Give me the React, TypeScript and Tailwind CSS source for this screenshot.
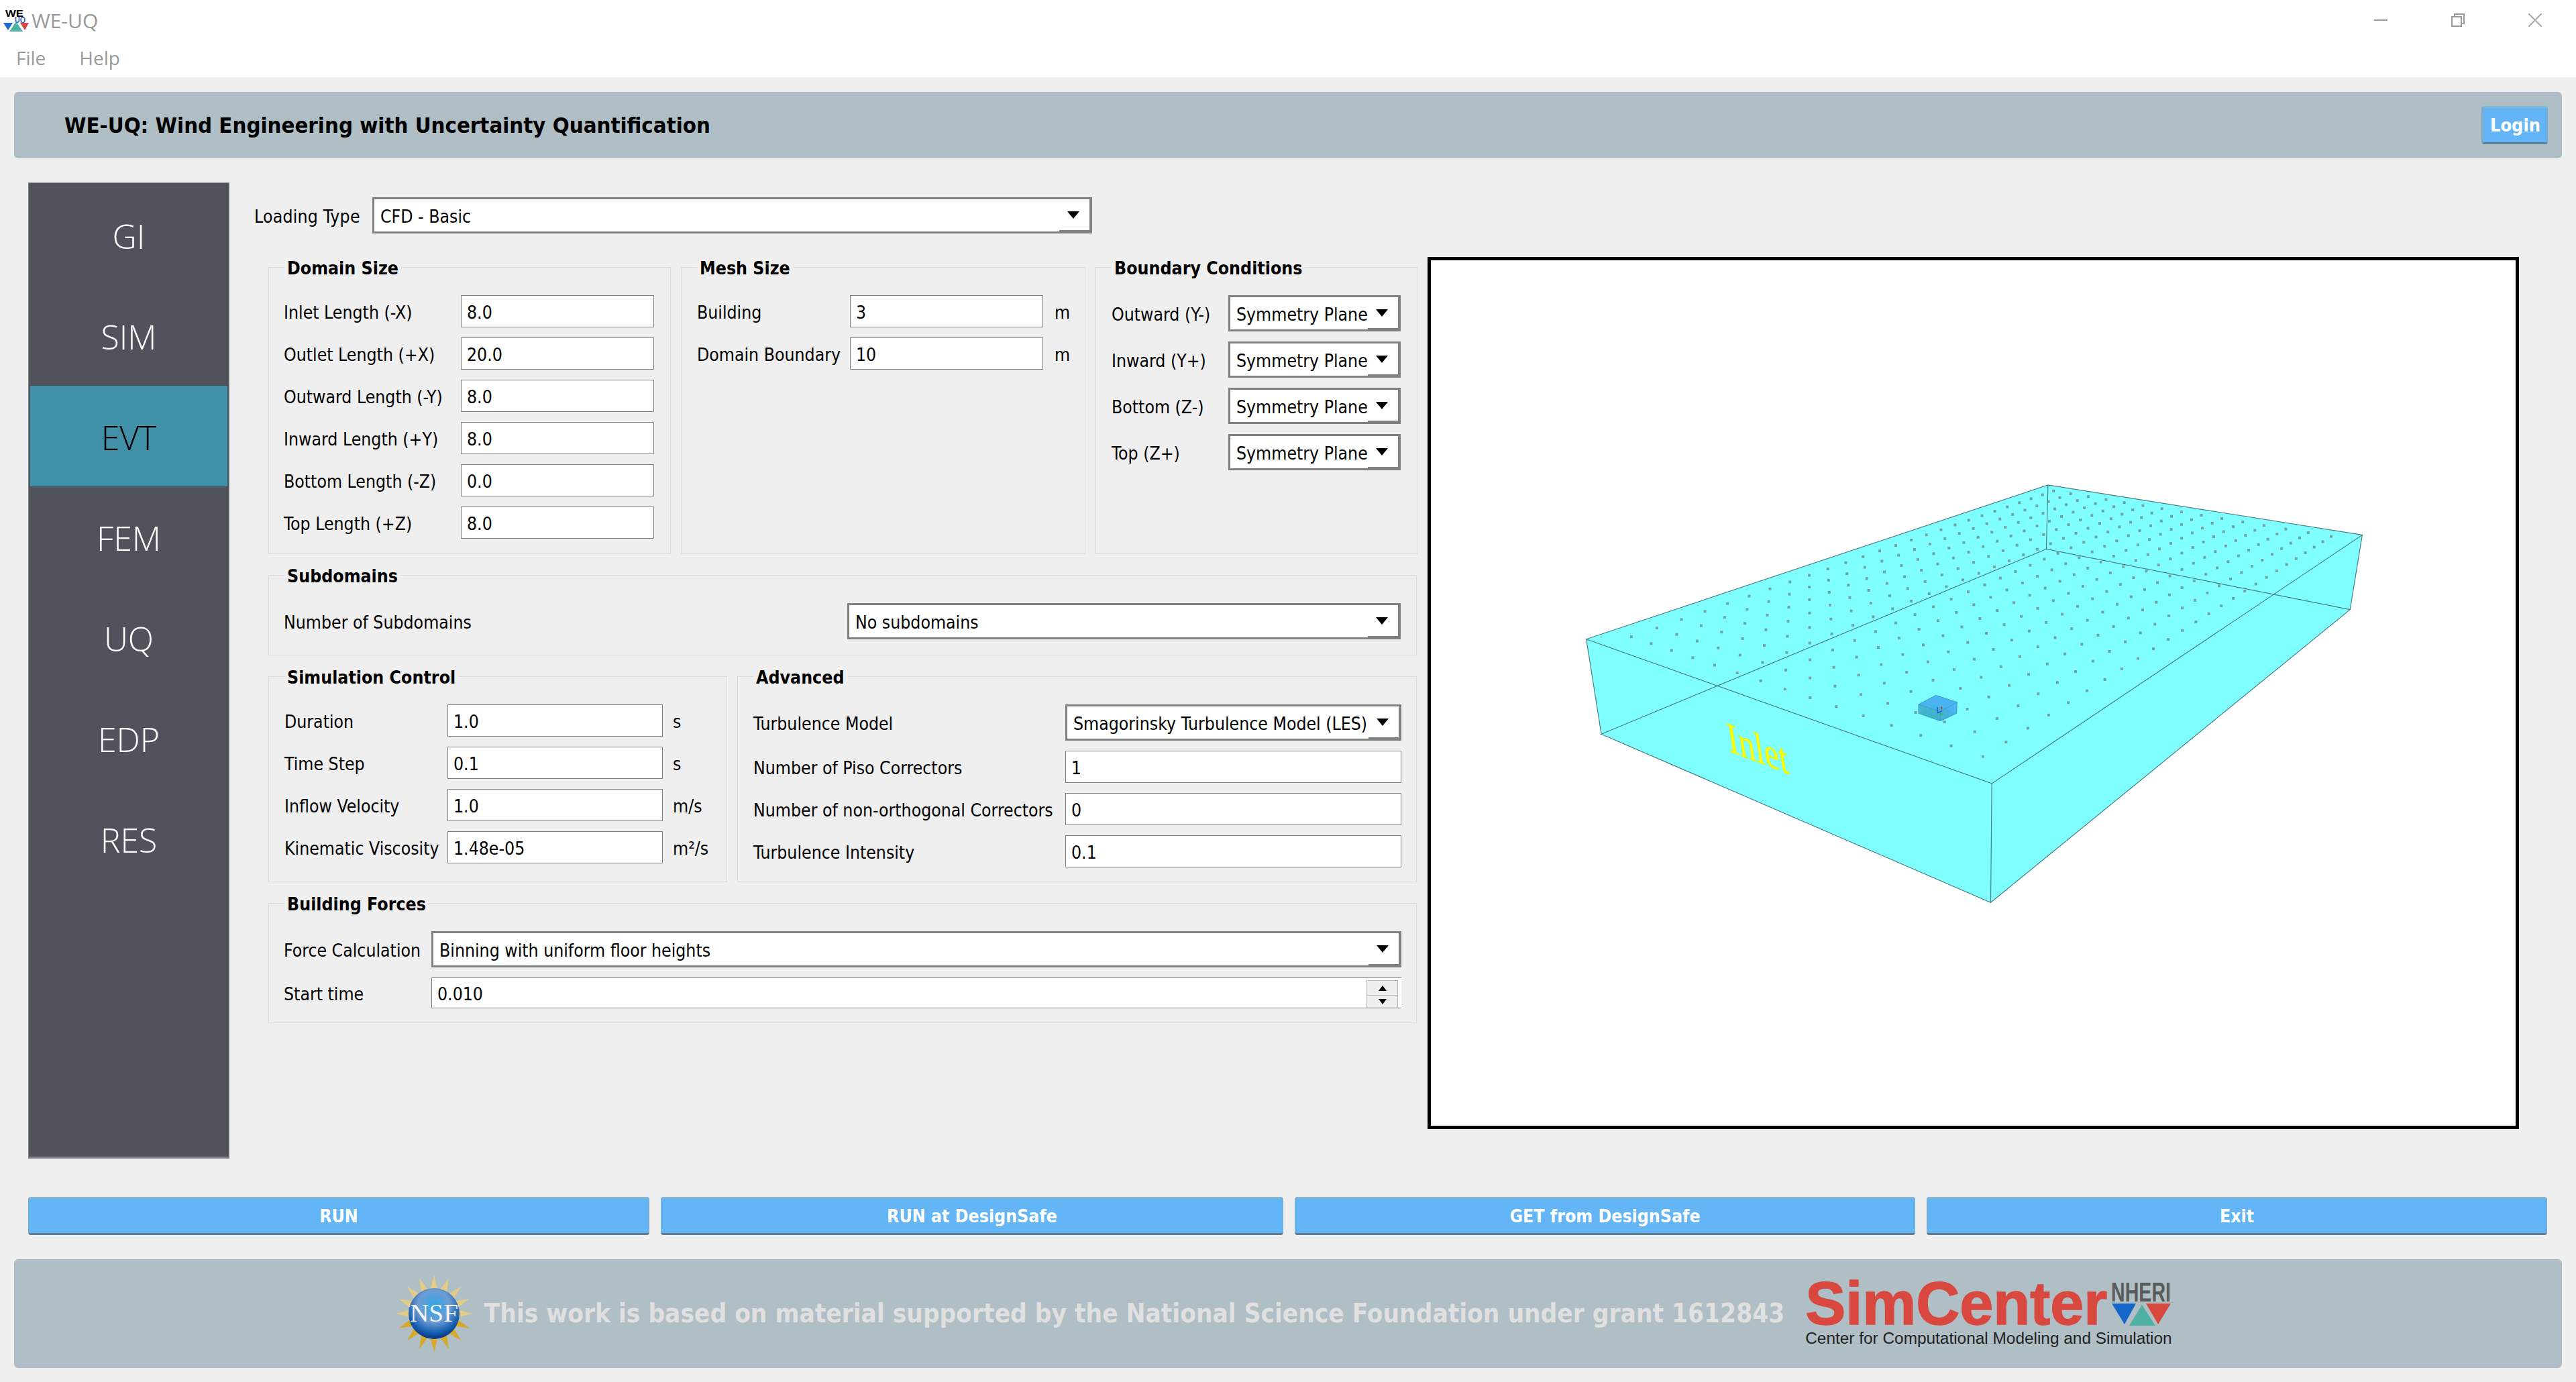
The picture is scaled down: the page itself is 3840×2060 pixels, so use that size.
import React from "react";

const F = "font-['DejaVu_Sans_Condensed','DejaVu_Sans',sans-serif]";

function project(u: number, v: number) {
  // homography from the unit square to the four corner dots of the grid (real pixels inside the frame)
  const conv = (x: number, y: number) => [2300 + x / 1.206 - 2133, 680 + y / 2.24 - 388];
  const [x0, y0] = conv(159, 603);
  const [x1, y1] = conv(791, 1003);
  const [x2, y2] = conv(1417, 268);
  const [x3, y3] = conv(918, 116);
  const dx1 = x1 - x2, dx2 = x3 - x2, sx = x0 - x1 + x2 - x3;
  const dy1 = y1 - y2, dy2 = y3 - y2, sy = y0 - y1 + y2 - y3;
  const det = dx1 * dy2 - dx2 * dy1;
  const g = (sx * dy2 - dx2 * sy) / det;
  const h = (dx1 * sy - sx * dy1) / det;
  const a = x1 - x0 + g * x1, b = x3 - x0 + h * x3, c = x0;
  const d = y1 - y0 + g * y1, e = y3 - y0 + h * y3, f = y0;
  const w = g * u + h * v + 1;
  return [(a * u + b * v + c) / w, (d * u + e * v + f) / w];
}

const dots: number[][] = [];
for (let i = 0; i < 15; i++) for (let j = 0; j < 26; j++) dots.push(project(i / 14, j / 25));

const P = (x: number, y: number) => `${(2300 + x / 1.206 - 2133).toFixed(1)},${(680 + y / 2.24 - 388).toFixed(1)}`;
const poly = (pts: number[][]) => pts.map((p) => P(p[0], p[1])).join(" ");
// coordinates read from the 3x crop at (2560,900)
const Z = (pts: number[][]) => pts.map((p) => `${(2560 + p[0] / 3 - 2133).toFixed(1)},${(900 + p[1] / 3 - 388).toFixed(1)}`).join(" ");
const A = [78, 611], B = [908, 96], C = [1473, 263], D = [807, 1093], E = [105, 928], G = [1451, 512], H = [905, 310], K = [805, 1490];

function Model() {
  return (
    <svg viewBox="0 0 1617 1290" className="w-full h-full block">
      <polygon points={poly([A, B, C, G, K, E])} fill="#7fffff" />
      {dots.map((p, i) => (
        <rect key={i} x={p[0] - 2} y={p[1] - 2} width={4} height={4} fill="#6fa3a6" />
      ))}
      <g fill="none" stroke="#4a7f85" strokeWidth={1.2}>
        <polygon points={poly([A, B, C, D])} />
        <polygon points={poly([E, H, G, K])} />
        <polyline points={poly([A, E])} />
        <polyline points={poly([B, H])} />
        <polyline points={poly([C, G])} />
        <polyline points={poly([D, K])} />
      </g>
      <polygon points={Z([[900, 450], [977, 409], [1072, 440], [1070, 490], [997, 524], [900, 490]])} fill="#4ab4f2" />
      <polygon points={Z([[900, 450], [997, 482], [997, 524], [900, 490]])} fill="#45b7cf" />
      <polygon points={Z([[900, 490], [975, 452], [1070, 490], [997, 524]])} fill="#3fb0d0" fillOpacity={0.55} />
      <g fill="none" stroke="#3a9fc4" strokeWidth={1}>
        <polyline points={Z([[900, 450], [997, 482], [1072, 440]])} />
        <polyline points={Z([[997, 482], [997, 524]])} />
        <polygon points={Z([[900, 450], [977, 409], [1072, 440], [1070, 490], [997, 524], [900, 490]])} />
      </g>
      <polyline points={Z([[985, 462], [985, 488], [1005, 480]])} fill="none" stroke="#1f5fd0" strokeWidth={1.5} />
      <rect x={2560 + 1000 / 3 - 2133} y={900 + 460 / 3 - 388} width={2} height={4} fill="#c23a3a" />
      <rect x={2560 + 995 / 3 - 2133} y={900 + 490 / 3 - 388} width={5} height={2} fill="#3fbf4f" />
      <text
        transform="matrix(0.748 0.284 0.155 0.99 445 732)"
        fontFamily="Liberation Serif"
        fontSize={66}
        fill="#ffff00"
        stroke="#e6e600"
        strokeWidth={0.6}
      >
        Inlet
      </text>
    </svg>
  );
}

const Arrow = () => (
  <svg width="18" height="11" viewBox="0 0 18 11">
    <polygon points="0,0 18,0 9,11" fill="#000" />
  </svg>
);

function Combo({ text, w, grow, h = "h-[54px]" }: { text: string; w?: string; grow?: boolean; h?: string }) {
  return (
    <div className={`${w ?? ""} ${grow ? "flex-1 min-w-0" : "shrink-0"} ${h} bg-white border-[3px] border-[#808080] flex items-stretch text-black`}>
      <span className="flex-1 min-w-0 pl-[9px] pt-[3px] overflow-hidden whitespace-nowrap flex items-center">{text}</span>
      <span className="w-[46px] shrink-0 flex items-start pt-[18px] pr-[3px] justify-center border-b-[2px] border-r-[1px] border-[#808080]">
        <Arrow />
      </span>
    </div>
  );
}

function Input({ value, w }: { value: string; w: string }) {
  return (
    <div className={`${w} h-[48px] shrink-0 bg-white border-[1px] border-[#808080] pl-[8px] pt-[4px] flex items-center text-black whitespace-nowrap`}>
      {value}
    </div>
  );
}

function Group({ title, className, children }: { title: string; className?: string; children?: React.ReactNode }) {
  return (
    <div className={`relative border-[1px] border-[#dcdcdc] ${className ?? ""}`}>
      <span className="absolute left-[23px] top-[-17px] h-[36px] px-[4px] bg-[#efefef] font-bold text-[26.5px] leading-[36px] text-black whitespace-nowrap">
        {title}
      </span>
      {children}
    </div>
  );
}

const Row = ({ label, value, labelW }: { label: string; value: string; labelW: string }) => (
  <div className="flex items-center h-[48px]">
    <span className={`${labelW} pt-[4px]`}>{label}</span>
    <Input value={value} w="w-[288px]" />
  </div>
);

function BlueButton({ children, className }: { children: React.ReactNode; className?: string }) {
  return (
    <div
      className={`bg-[#64b5f6] border-t-[3px] border-t-[#83b7cf] border-b-[3px] border-b-[#5f8092] border-x-[1px] border-x-[#7aa9c4] rounded-[4px] pt-[1px] flex items-center justify-center text-white font-bold text-[26.5px] ${className ?? ""}`}
    >
      {children}
    </div>
  );
}

function NsfLogo() {
  const rays = Array.from({ length: 16 }, (_, i) => (i * 360) / 16);
  return (
    <svg width="116" height="116" viewBox="-58 -58 116 116" className="shrink-0">
      <defs>
        <radialGradient id="globe" cx="50%" cy="35%" r="70%">
          <stop offset="0%" stopColor="#2aa9e6" />
          <stop offset="45%" stopColor="#6f9bd2" />
          <stop offset="75%" stopColor="#1560b0" />
          <stop offset="100%" stopColor="#05206f" />
        </radialGradient>
      </defs>
      {rays.map((r, i) => (
        <polygon
          key={i}
          points="-6,-34 0,-57 6,-34"
          fill={r > 95 && r < 265 ? "#d4a92c" : "#e3cd86"}
          transform={`rotate(${r})`}
        />
      ))}
      <circle r="38" fill="url(#globe)" />
      <text x="0" y="12" textAnchor="middle" fontFamily="Liberation Serif" fontSize="38" fill="#f2f4fa" textLength="72" lengthAdjust="spacingAndGlyphs">
        NSF
      </text>
    </svg>
  );
}

function SimCenterLogo() {
  return (
    <div className="flex flex-col w-[546px] shrink-0 ml-[31px] mb-[4px]">
      <div className="flex items-start h-[78px]">
        <span className="font-['Liberation_Sans',sans-serif] font-bold text-[90px] leading-[78px] text-[#d9483f] [-webkit-text-stroke:1.5px_#d9483f] w-[456px] whitespace-nowrap">
          SimCenter
        </span>
        <svg width="90" height="74" viewBox="0 0 90 74" className="block shrink-0">
          <text x="0" y="36" fontFamily="Liberation Sans" fontWeight="700" fontSize="41" fill="#5a5a5a" textLength="89" lengthAdjust="spacingAndGlyphs">
            NHERI
          </text>
          <polygon points="1,39 37,39 20,70" fill="#1467c8" />
          <polygon points="52,39 89,39 70,70" fill="#d9483f" />
          <polygon points="46,41 27,72 66,72" fill="#4fb0a3" />
        </svg>
      </div>
      <span className="font-['Liberation_Sans',sans-serif] text-[#222] text-[24.4px] leading-[26px] whitespace-nowrap">
        Center for Computational Modeling and Simulation
      </span>
    </div>
  );
}

function AppIcon() {
  return (
    <svg width="42" height="34" viewBox="0 0 42 34" className="shrink-0">
      <text x="5" y="12" fontFamily="Liberation Sans" fontWeight="700" fontSize="15" fill="#000" textLength="27" lengthAdjust="spacingAndGlyphs">WE</text>
      <text x="19" y="21" fontFamily="Liberation Sans" fontWeight="700" fontSize="12" fill="#2a62c0" textLength="16" lengthAdjust="spacingAndGlyphs">UQ</text>
      <polygon points="2,21 16,21 9,32" fill="#1a6cc8" />
      <polygon points="27,21 40,21 34,32" fill="#d24a45" />
      <polygon points="21,19 11,34 31,34" fill="#4db3a5" />
    </svg>
  );
}

const tabs = ["GI", "SIM", "EVT", "FEM", "UQ", "EDP", "RES"];
const Lbl = ({ className, children }: { className?: string; children: React.ReactNode }) => (
  <span className={`pt-[3px] ${className ?? ""}`}>{children}</span>
);

export default function App() {
  return (
    <div className={`w-[3840px] h-[2060px] overflow-hidden bg-[#efefef] flex flex-col ${F} text-[26.4px] text-black`}>
      {/* window chrome */}
      <div className="bg-white h-[115px] shrink-0 flex flex-col">
        <div className="h-[60px] flex items-center pl-[3px] pr-[51px]">
          <AppIcon />
          <span className="font-['Open_Sans',sans-serif] text-[#999] text-[30px] ml-[2px]">WE-UQ</span>
          <div className="ml-auto flex items-center gap-[95px]">
            <svg width="20" height="20" viewBox="0 0 20 20"><rect x="0" y="9" width="20" height="2" fill="#999" /></svg>
            <svg width="20" height="20" viewBox="0 0 20 20" fill="none" stroke="#999" strokeWidth="2">
              <rect x="1" y="5" width="14" height="14" />
              <polyline points="5,5 5,1 19,1 19,15 15,15" />
            </svg>
            <svg width="20" height="20" viewBox="0 0 20 20" stroke="#a8a8a8" strokeWidth="2"><line x1="0" y1="0" x2="20" y2="20" /><line x1="20" y1="0" x2="0" y2="20" /></svg>
          </div>
        </div>
        <div className="h-[55px] flex items-start pl-[24px] gap-[50px] font-['Open_Sans',sans-serif] text-[#999] text-[28px] leading-[52px]">
          <span>File</span>
          <span>Help</span>
        </div>
      </div>

      {/* header */}
      <div className="mt-[22px] mx-[21px] h-[99px] shrink-0 bg-[#b0bec5] rounded-[6px] flex items-center pl-[75px] pr-[21px]">
        <span className="font-bold text-[32.7px] pt-[2px]">WE-UQ: Wind Engineering with Uncertainty Quantification</span>
        <BlueButton className="ml-auto w-[99px] h-[57px] text-[27px] border-l-[3px]">Login</BlueButton>
      </div>

      {/* body */}
      <div className="mt-[36px] ml-[42px] flex h-[1455px] shrink-0">
        <div className="w-[300px] shrink-0 bg-[#50535b] border-[1px] border-[#7f8289] border-b-[3px] pt-[2px] px-[2px]">
          {tabs.map((t) => (
            <div
              key={t}
              className={`h-[150px] pt-[5px] flex items-center justify-center font-['Open_Sans',sans-serif] font-light text-[50px] ${t === "EVT" ? "bg-[#4091a8] text-black" : "text-white"}`}
            >
              {t}
            </div>
          ))}
        </div>

        <div className="w-[1769px] ml-[58px] shrink-0 flex flex-col">
          <div className="flex items-center h-[54px] mt-[22px] ml-[-21px]">
            <Lbl className="w-[176px] tracking-[0.2px]">Loading Type</Lbl>
            <Combo text="CFD - Basic" w="w-[1073px]" />
          </div>

          <div className="flex gap-[15px] mt-[50px] h-[428px]">
            <Group title="Domain Size" className="w-[600px] pt-[41px] pl-[22px] flex flex-col gap-[15px]">
              <Row label="Inlet Length (-X)" value="8.0" labelW="w-[264px]" />
              <Row label="Outlet Length (+X)" value="20.0" labelW="w-[264px]" />
              <Row label="Outward Length (-Y)" value="8.0" labelW="w-[264px]" />
              <Row label="Inward Length (+Y)" value="8.0" labelW="w-[264px]" />
              <Row label="Bottom Length (-Z)" value="0.0" labelW="w-[264px]" />
              <Row label="Top Length (+Z)" value="8.0" labelW="w-[264px]" />
            </Group>
            <Group title="Mesh Size" className="w-[603px] pt-[41px] pl-[23px] flex flex-col gap-[15px]">
              <div className="flex items-center h-[48px]">
                <Lbl className="w-[228px]">Building</Lbl>
                <Input value="3" w="w-[288px]" />
                <Lbl className="ml-[17px]">m</Lbl>
              </div>
              <div className="flex items-center h-[48px]">
                <Lbl className="w-[228px]">Domain Boundary</Lbl>
                <Input value="10" w="w-[288px]" />
                <Lbl className="ml-[17px]">m</Lbl>
              </div>
            </Group>
            <Group title="Boundary Conditions" className="w-[480px] pt-[41px] pl-[23px] flex flex-col gap-[15px]">
              {["Outward (Y-)", "Inward (Y+)", "Bottom (Z-)", "Top (Z+)"].map((l) => (
                <div key={l} className="flex items-center h-[54px]">
                  <Lbl className="w-[174px]">{l}</Lbl>
                  <Combo text="Symmetry Plane" w="w-[257px]" />
                </div>
              ))}
            </Group>
          </div>

          <Group title="Subdomains" className="mt-[31px] h-[120px] w-[1712px] pt-[41px] pl-[22px] pr-[23px] flex items-start">
            <div className="flex items-center h-[54px] w-full">
              <Lbl className="w-[840px]">Number of Subdomains</Lbl>
              <Combo text="No subdomains" grow />
            </div>
          </Group>

          <div className="flex gap-[15px] mt-[31px] h-[307px] w-[1712px]">
            <Group title="Simulation Control" className="w-[684px] pt-[41px] pl-[23px] flex flex-col gap-[15px]">
              {[
                ["Duration", "1.0", "s"],
                ["Time Step", "0.1", "s"],
                ["Inflow Velocity", "1.0", "m/s"],
                ["Kinematic Viscosity", "1.48e-05", "m²/s"],
              ].map(([l, v, u]) => (
                <div key={l} className="flex items-center h-[48px]">
                  <Lbl className="w-[243px]">{l}</Lbl>
                  <Input value={v} w="w-[321px]" />
                  <Lbl className="ml-[15px]">{u}</Lbl>
                </div>
              ))}
            </Group>
            <Group title="Advanced" className="w-[1013px] pt-[41px] pl-[23px] pr-[22px] flex flex-col">
              <div className="flex items-center h-[54px]">
                <Lbl className="w-[465px]">Turbulence Model</Lbl>
                <Combo text="Smagorinsky Turbulence Model (LES)" grow />
              </div>
              {[
                ["Number of Piso Correctors", "1"],
                ["Number of non-orthogonal Correctors", "0"],
                ["Turbulence Intensity", "0.1"],
              ].map(([l, v]) => (
                <div key={l} className="flex items-center h-[48px] mt-[15px]">
                  <Lbl className="w-[465px]">{l}</Lbl>
                  <Input value={v} w="flex-1" />
                </div>
              ))}
            </Group>
          </div>

          <Group title="Building Forces" className="mt-[31px] h-[179px] w-[1712px] pt-[41px] pl-[22px] pr-[22px] flex flex-col">
            <div className="flex items-center h-[54px]">
              <Lbl className="w-[220px]">Force Calculation</Lbl>
              <Combo text="Binning with uniform floor heights" grow />
            </div>
            <div className="flex items-center h-[46px] mt-[15px]">
              <Lbl className="w-[220px]">Start time</Lbl>
              <div className="flex-1 h-[46px] bg-white border-t-[1px] border-b-[1px] border-l-[1px] border-[#808080] pl-[8px] flex items-center">
                <span className="flex-1 pt-[3px]">0.010</span>
                <div className="w-[47px] self-end h-[41px] bg-[#efefef] border-x-[1px] border-t-[1px] border-[#b5b5b5] flex flex-col items-center mr-[5px]">
                  <div className="h-[22px] w-full flex items-center justify-center border-b-[1px] border-[#b5b5b5]">
                    <svg width="12" height="8" viewBox="0 0 12 8"><polygon points="0,8 12,8 6,0" fill="#000" /></svg>
                  </div>
                  <div className="flex-1 flex items-center justify-center">
                    <svg width="12" height="8" viewBox="0 0 12 8"><polygon points="0,0 12,0 6,8" fill="#000" /></svg>
                  </div>
                </div>
              </div>
            </div>
          </Group>
        </div>

        <div className="w-[1627px] h-[1300px] ml-[-41px] mt-[111px] shrink-0 bg-white border-[5px] border-black">
          <Model />
        </div>
      </div>

      {/* buttons */}
      <div className="mt-[57px] ml-[42px] h-[57px] shrink-0 flex gap-[17px]">
        <BlueButton className="w-[926px]">RUN</BlueButton>
        <BlueButton className="w-[928px]">RUN at DesignSafe</BlueButton>
        <BlueButton className="w-[925px]">GET from DesignSafe</BlueButton>
        <BlueButton className="w-[925px]">Exit</BlueButton>
      </div>

      {/* footer */}
      <div className="mt-[36px] mx-[21px] h-[162px] shrink-0 bg-[#b0bec5] rounded-[6px] pr-[14px] flex items-center justify-center">
        <NsfLogo />
        <span className="ml-[17px] font-bold text-[38.4px] text-[#e0e0e0] whitespace-nowrap">
          This work is based on material supported by the National Science Foundation under grant 1612843
        </span>
        <SimCenterLogo />
      </div>
    </div>
  );
}
